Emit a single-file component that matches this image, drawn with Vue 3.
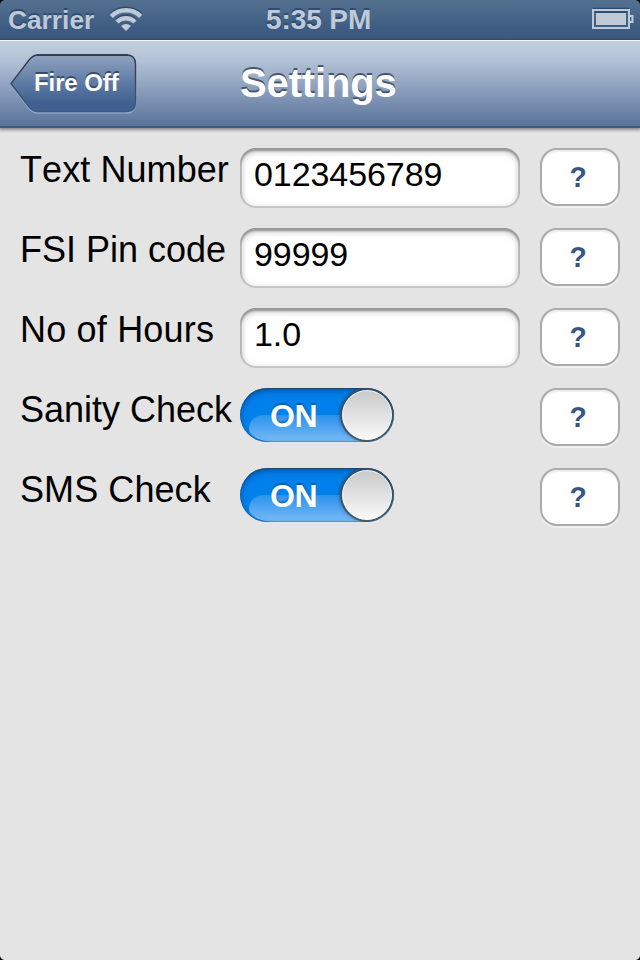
<script setup>
import { reactive } from 'vue'

const rows = reactive([
  { label: 'Text Number', type: 'text', value: '0123456789', spacing: 'wide' },
  { label: 'FSI Pin code', type: 'text', value: '99999', spacing: '' },
  { label: 'No of Hours', type: 'text', value: '1.0', spacing: 'wider' },
  { label: 'Sanity Check', type: 'switch', value: true, spacing: '' },
  { label: 'SMS Check', type: 'switch', value: true, spacing: 'wide' },
])
</script>

<template>
  <div class="screen">
    <header class="status">
      <div class="left">
        <span class="carrier">Carrier</span>
        <svg class="wifi" width="32" height="27" viewBox="0 0 32 27">
          <g fill="none" stroke="#304b71" stroke-width="4.500" transform="translate(0 -1.500)">
            <path d="M1.330 11.330A20.750 20.750 0 0 1 30.670 11.330" />
            <path d="M7 17A12.750 12.750 0 0 1 25 17" />
          </g>
          <g fill="none" stroke="#bfcad8" stroke-width="4.500">
            <path d="M1.330 11.330A20.750 20.750 0 0 1 30.670 11.330" />
            <path d="M7 17A12.750 12.750 0 0 1 25 17" />
          </g>
          <path d="M11.050 21.050A7 7 0 0 1 20.950 21.050L16 26Z" fill="#bfcad8" />
        </svg>
      </div>
      <span class="time">5:35 PM</span>
      <svg class="battery" width="44" height="24" viewBox="0 0 44 24">
        <path d="M1 1.500H37" stroke="#2f4a70" stroke-width="1.500" />
        <rect x="1" y="3" width="36" height="18" fill="none" stroke="#bfcad8" stroke-width="2" />
        <rect x="4" y="6" width="30" height="12" fill="#bfcad8" />
        <path d="M3 5H35" stroke="#304b71" stroke-width="2" />
        <path d="M38 9H40.500V15H38" fill="none" stroke="#bfcad8" stroke-width="2" />
      </svg>
    </header>

    <nav class="navbar">
      <button class="back">
        <svg class="back-shape" width="130" height="62" viewBox="0 0 130 62">
          <defs>
            <linearGradient id="backFill" x1="0" y1="0" x2="0" y2="1">
              <stop offset="0" stop-color="#91a3c0" />
              <stop offset="0.500" stop-color="#5d7aa4" />
              <stop offset="0.850" stop-color="#3f608f" />
              <stop offset="1" stop-color="#40618f" />
            </linearGradient>
            <linearGradient id="backEdge" x1="0" y1="0" x2="0" y2="1">
              <stop offset="0" stop-color="#2e384a" />
              <stop offset="0.450" stop-color="#37465f" />
              <stop offset="1" stop-color="#3a5a88" />
            </linearGradient>
          </defs>
          <path transform="translate(0 1.500)" d="M1 29.500L19 6Q23 1 28 1H116.500Q125.500 1 125.500 10V48.500Q125.500 57.500 116.500 57.500H28Q23 57.500 19 53Z" fill="none" stroke="#93a5c1" stroke-width="1.500" />
          <path d="M1 29.500L19 6Q23 1 28 1H116.500Q125.500 1 125.500 10V48.500Q125.500 57.500 116.500 57.500H28Q23 57.500 19 53Z" fill="url(#backFill)" stroke="url(#backEdge)" stroke-width="1.300" />
          <path d="M27 1H118" stroke="#303846" stroke-width="1.500" />
        </svg>
        <span class="back-text">Fire Off</span>
      </button>
      <h1 class="title">Settings</h1>
    </nav>

    <main class="form">
      <div v-for="row in rows" :key="row.label" class="row">
        <span class="label" :class="row.spacing">{{ row.label }}</span>
        <div class="control">
          <div v-if="row.type === 'text'" class="field">{{ row.value }}</div>
          <div v-else class="switch">
            <span class="gloss"></span>
            <span class="on">ON</span>
            <span class="knob"></span>
          </div>
        </div>
        <button class="help"><span class="mark">?</span></button>
      </div>
    </main>
    <i class="corner tl"></i>
    <i class="corner tr"></i>
    <i class="corner bl"></i>
    <i class="corner br"></i>
  </div>
</template>

<style>
body {
  margin: 0;
}
</style>

<style scoped>
.screen {
  position: relative;
  width: 640px;
  height: 960px;
  overflow: hidden;
  background: #e4e4e4;
  font-family: "Liberation Sans", Arial, sans-serif;
  font-kerning: none;
}
button {
  padding: 0;
  border: 0;
  background: none;
  font-family: inherit;
  font-kerning: none;
}
.status {
  box-sizing: border-box;
  height: 40px;
  padding: 0 6px 0 8px;
  display: grid;
  grid-template-columns: 258px auto 1fr;
  background: linear-gradient(#53708f, #496789 35%, #3e5b82 70%, #3d5a82);
  color: #bfcad8;
  font-weight: bold;
  line-height: 39px;
  text-shadow: 0 -2px 0 #304b71;
}
.left {
  display: flex;
}
.carrier {
  font-size: 26.3px;
  line-height: 41px;
}
.wifi {
  margin: 5px 0 0 16px;
}
.time {
  font-size: 28px;
  letter-spacing: -0.1px;
}
.battery {
  justify-self: end;
  margin: 7px -2px 0 0;
}
.navbar {
  box-sizing: border-box;
  height: 88px;
  padding-left: 10px;
  display: grid;
  grid-template-columns: 230px auto 1fr;
  border-top: 1px solid #f3f6f9;
  border-bottom: 2px solid #3c5a86;
  background: linear-gradient(#c3d0df, #b1c0d4 24%, #8a9dbb 58%, #597399);
  box-shadow: 0 1px 3px 1px rgba(0, 0, 0, 0.4);
}
.back {
  display: grid;
  width: 130px;
  height: 62px;
  margin-top: 13px;
}
.back-shape,
.back-text {
  grid-area: 1 / 1;
}
.back-text {
  z-index: 1;
  padding-left: 24px;
  text-align: left;
  color: #fff;
  font-size: 24px;
  font-weight: bold;
  line-height: 57px;
  letter-spacing: -0.1px;
  text-shadow: 0 -2px 0 #3a4c69;
}
.title {
  margin: 0;
  color: #fff;
  font-size: 40px;
  font-weight: bold;
  line-height: 84px;
  letter-spacing: -0.15px;
  text-shadow: 0 -2px 0 #46566e;
}
.form {
  display: flex;
  flex-direction: column;
  gap: 20px;
  padding: 20px;
}
.row {
  display: grid;
  grid-template-columns: 220px 300px 80px;
  height: 60px;
}
.label {
  color: #000;
  font-size: 36px;
  line-height: 44px;
  white-space: nowrap;
}
.wide {
  letter-spacing: 0.08px;
}
.wider {
  letter-spacing: 0.18px;
}
.field {
  box-sizing: border-box;
  width: 280px;
  height: 60px;
  padding-left: 14px;
  border-radius: 16px;
  background: #fff;
  color: #000;
  font-size: 34px;
  line-height: 53px;
  letter-spacing: -0.08px;
  box-shadow: inset 0 3px 2px #999, inset 0 0 0 2px rgba(130, 130, 130, 0.33), inset 0 2px 6px 2px rgba(0, 0, 0, 0.22);
}
.switch {
  position: relative;
  width: 154px;
  height: 54px;
  border-radius: 27px;
  overflow: hidden;
  background: #0080ea;
}
.switch::after {
  content: "";
  position: absolute;
  inset: 0;
  border-radius: 27px;
  box-shadow: inset 0 1px 1px rgba(50, 60, 70, 0.65), inset 0 0 1px 1px rgba(70, 80, 90, 0.3), inset 0 3px 6px rgba(0, 40, 100, 0.45);
}
.gloss {
  position: absolute;
  left: 9px;
  top: 27px;
  width: 145px;
  height: 27px;
  border-radius: 14px 0 0 26px / 14px 0 0 13px;
  background: linear-gradient(#2b92ec, #78bbf7);
}
.on {
  position: absolute;
  left: 30px;
  top: 0;
  color: #fff;
  font-size: 32px;
  font-weight: bold;
  line-height: 56px;
  letter-spacing: -0.3px;
  text-shadow: 0 -2px 1px rgba(0, 80, 150, 0.6);
}
.knob {
  position: absolute;
  z-index: 1;
  box-sizing: border-box;
  right: 2px;
  top: 2px;
  width: 50px;
  height: 50px;
  border: 1.500px solid #fafafa;
  border-radius: 50%;
  background: linear-gradient(#cacaca, #e1e1e1 50%, #f9f9f9);
  box-shadow: 0 0 0 2px rgba(75, 75, 75, 0.8), -2px 0 4px rgba(0, 30, 70, 0.5);
}
.help {
  box-sizing: border-box;
  width: 80px;
  height: 58px;
  border: 2px solid #aaa;
  border-radius: 17px;
  background: #fff;
  color: #385487;
  font-size: 30px;
  font-weight: bold;
  line-height: 54px;
  padding-right: 3px;
  box-shadow: 0 2px 0 #f0f0f0, inset 0 2px 1px #eee;
}
.mark {
  display: inline-block;
  transform: scaleX(0.94);
}
.corner {
  position: absolute;
  width: 5px;
  height: 5px;
}
.tl {
  left: 0;
  top: 0;
  background: radial-gradient(circle at 100% 100%, transparent 4.500px, #000 5.500px);
}
.tr {
  right: 0;
  top: 0;
  background: radial-gradient(circle at 0 100%, transparent 4.500px, #000 5.500px);
}
.bl {
  left: 0;
  bottom: 0;
  background: radial-gradient(circle at 100% 0, transparent 4.500px, #000 5.500px);
}
.br {
  right: 0;
  bottom: 0;
  background: radial-gradient(circle at 0 0, transparent 4.500px, #000 5.500px);
}
</style>
